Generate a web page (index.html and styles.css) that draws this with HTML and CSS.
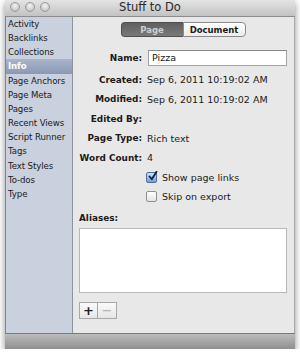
FILE: index.html
```html
<!DOCTYPE html>
<html lang="en">
<head>
    <meta charset="UTF-8">
    <meta name="viewport" content="width=device-width, initial-scale=1.0">
    <title>Stuff to Do</title>
    <link rel="stylesheet" href="styles.css">
</head>
<body>
    <div class="window">
        <div class="titlebar">
            <div class="lights"><span></span><span></span><span></span></div>
            <div class="title">Stuff to Do</div>
        </div>

        <div class="main">
            <ul class="sidebar">
                <li>Activity</li>
                <li>Backlinks</li>
                <li>Collections</li>
                <li class="selected">Info</li>
                <li>Page Anchors</li>
                <li>Page Meta</li>
                <li>Pages</li>
                <li>Recent Views</li>
                <li>Script Runner</li>
                <li>Tags</li>
                <li>Text Styles</li>
                <li>To-dos</li>
                <li>Type</li>
            </ul>

            <div class="content">
                <div class="segmented">
                    <span class="seg active">Page</span>
                    <span class="seg">Document</span>
                </div>

                <div class="field name">
                    <label>Name:</label>
                    <div class="input">Pizza</div>
                </div>
                <div class="field">
                    <label>Created:</label>
                    <span>Sep 6, 2011 10:19:02 AM</span>
                </div>
                <div class="field">
                    <label>Modified:</label>
                    <span>Sep 6, 2011 10:19:02 AM</span>
                </div>
                <div class="field">
                    <label>Edited By:</label>
                    <span></span>
                </div>
                <div class="field">
                    <label>Page Type:</label>
                    <span>Rich text</span>
                </div>
                <div class="field">
                    <label>Word Count:</label>
                    <span>4</span>
                </div>

                <div class="check">
                    <span class="box checked">
                        <svg width="11" height="11" viewBox="0 0 11 11">
                            <path d="M2.5 5.5 L4.8 8.2 L9.5 0.8" fill="none" stroke="#10223f" stroke-width="1.8" stroke-linecap="round" stroke-linejoin="round"/>
                        </svg>
                    </span>
                    Show page links
                </div>
                <div class="check">
                    <span class="box"></span>
                    Skip on export
                </div>

                <div class="aliases-label">Aliases:</div>
                <div class="aliases"></div>

                <div class="buttons">
                    <span class="btn">+</span>
                    <span class="btn off">&minus;</span>
                </div>
            </div>
        </div>

        <div class="statusbar"></div>
    </div>
</body>
</html>
```
FILE: styles.css
```css
* {
    margin: 0;
    padding: 0;
    box-sizing: border-box;
}

body {
    background: #fff;
    font-family: "DejaVu Sans", sans-serif;
    color: #1a1a1a;
}

.window {
    width: 290px;
    height: 349px;
    margin-left: 5px;
    display: flex;
    flex-direction: column;
    box-shadow: 0 3px 7px rgba(0, 0, 0, 0.45);
}

/* title bar */
.titlebar {
    height: 17px;
    display: grid;
    grid-template-columns: 1fr auto 1fr;
    align-items: center;
    background: linear-gradient(#e4e4e4, #c2c2c2);
    border-bottom: 1px solid #8c8c8c;
}

.lights {
    display: flex;
    gap: 5px;
    padding-left: 5px;
    margin-top: -3px;
}

.lights span {
    width: 10px;
    height: 10px;
    border-radius: 50%;
    background: radial-gradient(circle at 50% 35%, #f4f4f4, #cfcfcf 60%, #b4b4b4);
    border: 1px solid #9a9a9a;
}

.title {
    font-size: 11.5px;
    color: #2a2a2a;
    margin-top: -2px;
}

/* body */
.main {
    flex: 1;
    display: flex;
    min-height: 0;
}

.sidebar {
    width: 68px;
    list-style: none;
    background: #c8d1dd;
    border-left: 1px solid #7f8790;
    border-right: 1px solid #8e949c;
    font-size: 8.6px;
    letter-spacing: -0.1px;
}

.sidebar li {
    height: 14.17px;
    line-height: 14.17px;
    padding-left: 2px;
    white-space: nowrap;
}

.sidebar li.selected {
    background: linear-gradient(#aab5ca, #8a98b3);
    color: #fff;
    font-weight: bold;
}

.content {
    flex: 1;
    background: #e8e8e8;
    padding: 5px 7px 0 6px;
    border-right: 1px solid #a9a9a9;
}

.segmented {
    display: flex;
    width: 125px;
    height: 15px;
    margin: 0 auto;
    font-size: 8.5px;
    font-weight: bold;
}

.seg {
    flex: 1;
    display: flex;
    align-items: center;
    justify-content: center;
    border: 1px solid #8b8b8b;
    background: linear-gradient(#ffffff, #ececec);
    border-radius: 0 4px 4px 0;
}

.seg.active {
    background: linear-gradient(#5f5f5f, #7a7a7a);
    color: #cfcfcf;
    border-color: #4f4f4f;
    border-radius: 4px 0 0 4px;
    border-right: none;
}

/* info rows */
.field {
    display: grid;
    grid-template-columns: 63px 1fr;
    column-gap: 5px;
    align-items: center;
    height: 19.5px;
    font-size: 9.5px;
}

.field label {
    display: flex;
    justify-content: flex-end;
    white-space: nowrap;
    font-weight: bold;
    font-size: 8.9px;
}

.field.name {
    height: 16px;
    margin: 13px 0 4px;
}

.input {
    height: 16px;
    margin-left: 1px;
    background: #fff;
    border: 1px solid #a3a3a3;
    border-top-color: #8a8a8a;
    padding-left: 3px;
    line-height: 14px;
}

.check {
    display: flex;
    align-items: center;
    gap: 5px;
    height: 19px;
    padding-left: 67px;
    font-size: 9.5px;
}

.box {
    width: 11px;
    height: 11px;
    border: 1px solid #8f8f8f;
    border-radius: 2px;
    background: linear-gradient(#ffffff, #e3e3e3);
    position: relative;
}

.box.checked {
    background: linear-gradient(#cfe2f7, #6fa0dc);
    border-color: #4f6f9a;
}

.box svg {
    position: absolute;
    left: 0;
    top: -2px;
}

.aliases-label {
    margin-top: 6px;
    height: 12px;
    line-height: 12px;
    font-size: 8.9px;
    font-weight: bold;
}

.aliases {
    margin-top: 4px;
    height: 65px;
    background: #fff;
    border: 1px solid #b8b8b8;
}

.buttons {
    display: flex;
    margin-top: 9px;
}

.btn {
    width: 19px;
    height: 17px;
    display: flex;
    align-items: center;
    justify-content: center;
    border: 1px solid #a8a8a8;
    background: linear-gradient(#fafafa, #e6e6e6);
    font-size: 13px;
    font-weight: bold;
    color: #222;
}

.btn.off {
    border-left: none;
    color: #a8a8a8;
    font-weight: normal;
}

.statusbar {
    height: 16px;
    background: linear-gradient(#bcbcbc, #8f8f8f);
    border-top: 1px solid #7a7a7a;
}
```
